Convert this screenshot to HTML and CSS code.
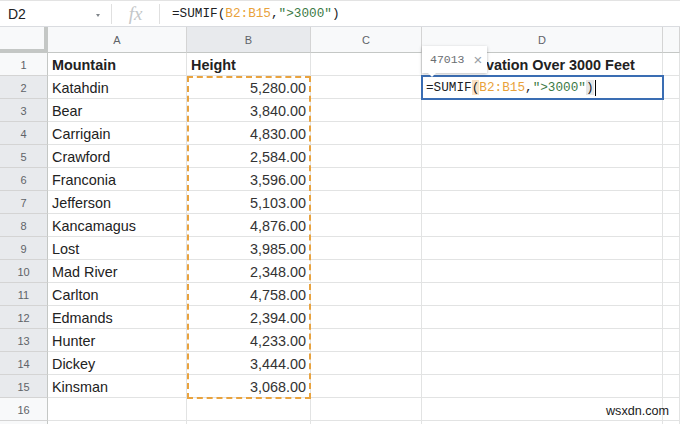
FILE: index.html
```html
<!DOCTYPE html>
<html>
<head>
<meta charset="utf-8">
<link rel="stylesheet" href="styles.css">
</head>
<body>
<div class="app">
  <div class="fbar">
    <div class="namebox"><span class="name">D2</span><span class="caret"></span></div>
    <div class="sep"></div>
    <div class="fx">fx</div>
    <div class="sep"></div>
    <div class="formula mono">=SUMIF(<span class="ref">B2:B15</span>,<span class="str">"&gt;3000"</span>)</div>
  </div>
  <div class="sheet">
    <div class="corner"></div>
    <div class="ch">A</div>
    <div class="ch sel">B</div>
    <div class="ch">C</div>
    <div class="ch">D</div>
    <div class="ch"></div>

    <div class="rh">1</div><div class="c b">Mountain</div><div class="c b">Height</div><div class="c"></div><div class="c b title">Total Elevation Over 3000 Feet</div><div class="c"></div>
    <div class="rh sel">2</div><div class="c">Katahdin</div><div class="c n">5,280.00</div><div class="c"></div><div class="c"></div><div class="c"></div>
    <div class="rh sel">3</div><div class="c">Bear</div><div class="c n">3,840.00</div><div class="c"></div><div class="c"></div><div class="c"></div>
    <div class="rh sel">4</div><div class="c">Carrigain</div><div class="c n">4,830.00</div><div class="c"></div><div class="c"></div><div class="c"></div>
    <div class="rh sel">5</div><div class="c">Crawford</div><div class="c n">2,584.00</div><div class="c"></div><div class="c"></div><div class="c"></div>
    <div class="rh sel">6</div><div class="c">Franconia</div><div class="c n">3,596.00</div><div class="c"></div><div class="c"></div><div class="c"></div>
    <div class="rh sel">7</div><div class="c">Jefferson</div><div class="c n">5,103.00</div><div class="c"></div><div class="c"></div><div class="c"></div>
    <div class="rh sel">8</div><div class="c">Kancamagus</div><div class="c n">4,876.00</div><div class="c"></div><div class="c"></div><div class="c"></div>
    <div class="rh sel">9</div><div class="c">Lost</div><div class="c n">3,985.00</div><div class="c"></div><div class="c"></div><div class="c"></div>
    <div class="rh sel">10</div><div class="c">Mad River</div><div class="c n">2,348.00</div><div class="c"></div><div class="c"></div><div class="c"></div>
    <div class="rh sel">11</div><div class="c">Carlton</div><div class="c n">4,758.00</div><div class="c"></div><div class="c"></div><div class="c"></div>
    <div class="rh sel">12</div><div class="c">Edmands</div><div class="c n">2,394.00</div><div class="c"></div><div class="c"></div><div class="c"></div>
    <div class="rh sel">13</div><div class="c">Hunter</div><div class="c n">4,233.00</div><div class="c"></div><div class="c"></div><div class="c"></div>
    <div class="rh sel">14</div><div class="c">Dickey</div><div class="c n">3,444.00</div><div class="c"></div><div class="c"></div><div class="c"></div>
    <div class="rh sel">15</div><div class="c">Kinsman</div><div class="c n">3,068.00</div><div class="c"></div><div class="c"></div><div class="c"></div>
    <div class="rh">16</div><div class="c"></div><div class="c"></div><div class="c"></div><div class="c"></div><div class="c"></div>
    <div class="rh"></div><div class="c"></div><div class="c"></div><div class="c"></div><div class="c"></div><div class="c"></div>

    <div class="ants"></div>
    <div class="editor mono">=SUMIF<span class="pm">(</span><span class="ref">B2:B15</span>,<span class="str">"&gt;3000"</span><span class="pm2">)</span><span class="cursor"></span></div>
    <div class="tip">47013 <span class="x">×</span><span class="notch"></span></div>
    <div class="mark">wsxdn.com</div>
  </div>
</div>
</body>
</html>
```
FILE: styles.css
```css
* { box-sizing: border-box; }
html, body { margin: 0; padding: 0; }
body {
  width: 680px;
  height: 424px;
  overflow: hidden;
  background: #fff;
  font-family: "Liberation Sans", Arial, sans-serif;
  color: #222;
}
.app { width: 680px; height: 424px; overflow: hidden; }
.mono { font-family: "Liberation Mono", "DejaVu Sans Mono", monospace; font-size: 12.7px; }

.fbar {
  height: 27px;
  display: flex;
  align-items: center;
  border-top: 1px solid #e3e3e3;
  border-bottom: 1px solid #dadce0;
}
.namebox {
  width: 111px;
  display: flex;
  align-items: center;
  padding-left: 8px;
  padding-right: 11px;
}
.name { font-size: 14px; color: #202124; flex: 1; }
.caret {
  width: 0; height: 0;
  border-left: 2.5px solid transparent;
  border-right: 2.5px solid transparent;
  border-top: 3px solid #80868b;
  margin-top: 4px;
}
.sep { width: 1px; height: 20px; background: #e0e0e0; }
.fx {
  width: 47px;
  text-align: center;
  font-family: "Liberation Serif", serif;
  font-style: italic;
  font-size: 19px;
  color: #c4c7c9;
  line-height: 20px;
}
.formula { padding-left: 12px; color: #202124; }
.ref { color: #e9a23b; }
.str { color: #3b7a45; }

.sheet {
  position: relative;
  display: grid;
  grid-template-columns: 48px 139px 124px 111px 241px 17px;
  grid-template-rows: 26px;
  grid-auto-rows: 23px;
}
.corner {
  background: #f8f9fa;
  border-right: 4px solid #c4c7c5;
  border-bottom: 4px solid #c4c7c5;
}
.ch {
  background: #f8f9fa;
  border-right: 1px solid #d4d4d4;
  border-bottom: 1px solid #c4c7c5;
  font-size: 11px;
  color: #5f6368;
  display: flex;
  align-items: center;
  justify-content: center;
  padding-top: 1px;
}
.ch.sel { background: #e8eaed; }
.rh {
  background: #f8f9fa;
  border-right: 1px solid #c4c7c5;
  border-bottom: 1px solid #d4d4d4;
  font-size: 11px;
  color: #5f6368;
  display: flex;
  align-items: center;
  justify-content: center;
  padding-top: 1px;
}
.rh.sel { background: #e8eaed; }
.c {
  border-right: 1px solid #e2e3e3;
  border-bottom: 1px solid #e2e3e3;
  font-size: 14.4px;
  padding: 2px 4px 0 4px;
  display: flex;
  align-items: center;
  white-space: nowrap;
  color: #222;
}
.c.b { font-weight: bold; }
.c.n { justify-content: flex-end; color: #333; }
.c.title { padding-left: 5px; overflow: visible; }

.ants {
  position: absolute;
  left: 187px;
  top: 49px;
  width: 124px;
  height: 323px;
  border: 2px dashed #e9a33f;
}
.editor {
  position: absolute;
  left: 421px;
  top: 48px;
  width: 243px;
  height: 25px;
  border: 2px solid #3a6db3;
  background: #fff;
  display: flex;
  align-items: center;
  padding-left: 3px;
  color: #202124;
  white-space: pre;
}
.pm { background: #fbe2c6; }
.pm2 { background: #e6e6e6; }
.cursor { display: inline-block; width: 1px; height: 16px; background: #000; margin-left: 1px; }
.tip {
  position: absolute;
  left: 422px;
  top: 19px;
  width: 65px;
  height: 27px;
  background: #fff;
  box-shadow: 0 1px 3px rgba(60,64,67,0.35);
  color: #6a6e72;
  display: flex;
  align-items: center;
  padding-left: 8px;
  white-space: pre;
  font-family: "Liberation Mono", monospace;
  font-size: 11.5px;
}
.tip .x { font-family: "Liberation Sans", sans-serif; font-size: 15px; color: #9aa0a6; margin-left: 2px; }
.notch {
  position: absolute;
  left: 6px;
  bottom: -4px;
  width: 0; height: 0;
  border-left: 4px solid transparent;
  border-right: 4px solid transparent;
  border-top: 4px solid #fff;
}
.mark {
  position: absolute;
  left: 606px;
  top: 377px;
  font-size: 12.6px;
  color: #1a1a1a;
}
```
